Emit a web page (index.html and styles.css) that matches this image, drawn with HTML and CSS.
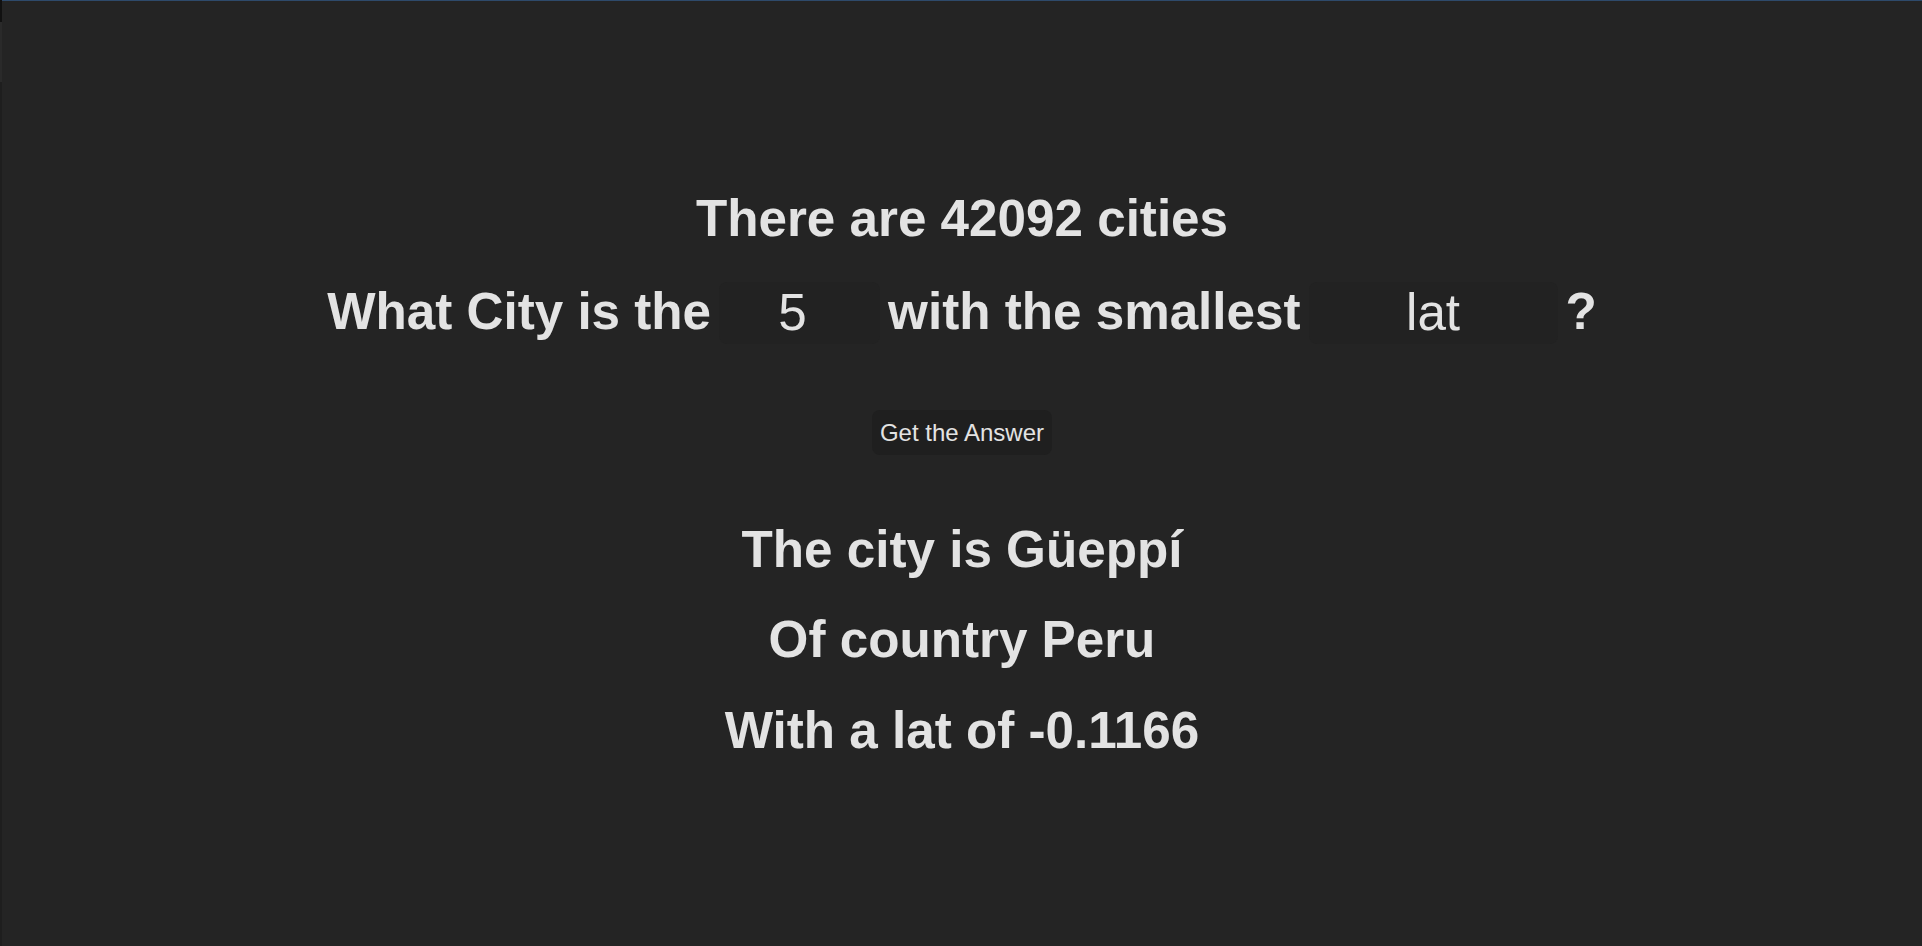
FILE: index.html
```html
<!DOCTYPE html>
<html lang="en">
<head>
<meta charset="utf-8">
<title>Cities</title>
<link rel="stylesheet" href="styles.css">
</head>
<body>
<div class="edge"><div class="edge-top"></div><div class="edge-mid"></div></div>
<div class="topline"></div>
<main class="app">
  <h1 class="title">There are 42092 cities</h1>
  <div class="question">
    <span>What City is the</span>
    <input class="field field-num" type="number" value="5">
    <span>with the smallest</span>
    <input class="field field-key" type="text" value="lat">
    <span>?</span>
  </div>
  <button class="ask">Get the Answer</button>
  <h1 class="title">The city is Güeppí</h1>
  <h1 class="title">Of country Peru</h1>
  <h1 class="title">With a lat of -0.1166</h1>
</main>
</body>
</html>
```

FILE: styles.css
```css
html, body {
  margin: 0;
  padding: 0;
  background: #242424;
}
body {
  font-family: "Liberation Sans", Arial, sans-serif;
  color: #e3e3e3;
  min-height: 946px;
  box-sizing: border-box;
  padding-left: 2px;
  display: flex;
  align-items: flex-start;
  justify-content: center;
}
.edge {
  position: absolute;
  left: 0;
  top: 0;
  width: 2px;
  height: 946px;
  background: #1e1e1e;
}
.edge-top {
  height: 22px;
  background: #111111;
}
.edge-mid {
  height: 60px;
  background: #2a2a2a;
}
.topline {
  position: absolute;
  left: 2px;
  right: 0;
  top: 0;
  height: 1px;
  background: #2e4a6b;
}
.app {
  display: flex;
  flex-direction: column;
  align-items: center;
  padding-top: 191px;
}
.title {
  font-size: 51.2px;
  line-height: 1.1;
  font-weight: bold;
  margin: 0 0 34.3px 0;
  text-align: center;
}
.question {
  display: flex;
  align-items: center;
  gap: 8px;
  height: 62px;
  font-size: 51.2px;
  line-height: 1.1;
  font-weight: bold;
}
.field {
  box-sizing: border-box;
  height: 62px;
  border: none;
  border-radius: 8px;
  background: #222222;
  color: #e3e3e3;
  font-family: "Liberation Sans", Arial, sans-serif;
  font-size: 51.2px;
  font-weight: normal;
  text-align: center;
  padding: 0;
  outline: none;
}
.field-num {
  width: 161px;
  padding-right: 14px;
  -moz-appearance: textfield;
}
.field-num::-webkit-inner-spin-button,
.field-num::-webkit-outer-spin-button {
  -webkit-appearance: none;
  margin: 0;
}
.field-key { width: 249px; }
.ask {
  margin-top: 66px;
  margin-bottom: 67px;
  font-family: "Liberation Sans", Arial, sans-serif;
  font-size: 24px;
  line-height: 27px;
  padding: 9px 8px;
  border: none;
  border-radius: 8px;
  background: #1f1f1f;
  color: #e3e3e3;
}
```
